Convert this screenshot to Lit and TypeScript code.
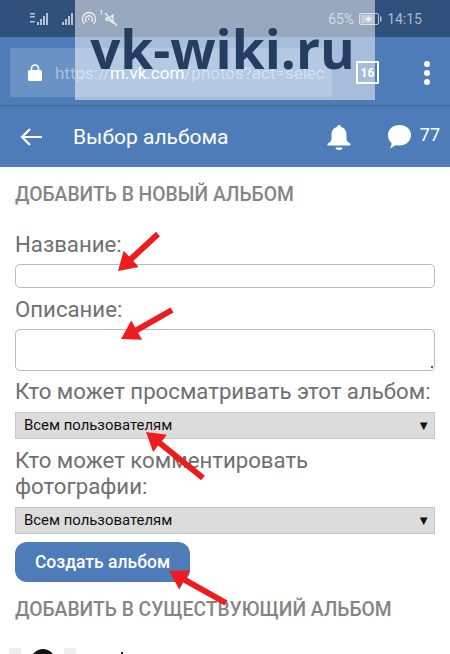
import { LitElement, html, css, svg } from "lit";
import { customElement } from "lit/decorators.js";

type Arrow = [number, number, number, number];
const ARROWS: Arrow[] = [
  [158, 234, 118, 271],
  [172, 310, 121, 339],
  [203, 478, 146, 432],
  [226, 603, 169, 571],
];

function arrowPoints([x1, y1, x2, y2]: Arrow): string {
  const dx = x2 - x1, dy = y2 - y1;
  const len = Math.hypot(dx, dy);
  const ux = dx / len, uy = dy / len;
  const nx = -uy, ny = ux;
  const head = 18, hw = 11, sw = 3;
  const bx = x2 - ux * head, by = y2 - uy * head;
  const pts = [
    [x1 + nx * sw, y1 + ny * sw],
    [bx + nx * sw, by + ny * sw],
    [bx + nx * hw, by + ny * hw],
    [x2, y2],
    [bx - nx * hw, by - ny * hw],
    [bx - nx * sw, by - ny * sw],
    [x1 - nx * sw, y1 - ny * sw],
  ];
  return pts.map((p) => p.map((v) => v.toFixed(1)).join(",")).join(" ");
}

@customElement("app-root")
export class AppRoot extends LitElement {
  static styles = css`
    :host {
      display: block;
      position: relative;
      width: 450px;
      height: 654px;
      overflow: hidden;
      background: #fff;
      font-family: Roboto, "Liberation Sans", sans-serif;
    }
    * { box-sizing: border-box; }
    .status {
      height: 37px;
      background: #30507c;
      display: flex;
      align-items: center;
      padding: 0 28px 0 30px;
      color: #a9b8cc;
      font-size: 14px;
    }
    .status svg { display: block; }
    .status .left { display: flex; align-items: center; gap: 12px; }
    .status .wifi { display: flex; align-items: center; gap: 5px; }
    .status .sup { font-size: 8px; color: #e4e8ee; margin: -12px -6px 0 -3px; }
    .status .right { margin-left: auto; display: flex; align-items: center; gap: 5px; }
    .browser {
      height: 70px;
      background: #4d7cb8;
      display: flex;
      align-items: center;
      padding: 3px 20px 0 10px;
      border-bottom: 2px solid #44709f;
    }
    .url {
      width: 322px;
      height: 49px;
      background: #6a92c4;
      border-radius: 2px;
      display: flex;
      align-items: center;
      padding-left: 18px;
      gap: 13px;
      color: #a6c0df;
      font-size: 17px;
      white-space: nowrap;
    }
    .url b { font-weight: 400; color: #fff; }
    .tabs {
      width: 23px;
      height: 23px;
      margin-left: 24px;
      border: 2px solid #fff;
      color: #fff;
      font-size: 12px;
      font-weight: 700;
      display: flex;
      align-items: center;
      justify-content: center;
    }
    .dots {
      margin-left: auto;
      display: flex;
      flex-direction: column;
      gap: 3px;
    }
    .dots i { width: 6px; height: 6px; border-radius: 50%; background: #fff; display: block; }
    .vk {
      height: 60px;
      background: #4d7cb8;
      display: flex;
      align-items: center;
      color: #fff;
      padding: 0 10px 0 20px;
    }
    .vk .title { margin-left: 31px; font-size: 21px; }
    .vk .bell { margin-left: auto; }
    .vk .msg { margin-left: 36px; }
    .vk .count { margin-left: 9px; font-size: 18px; margin-top: -6px; }
    .page { padding: 0 15px; }
    h2 {
      margin: 0;
      font-size: 19.3px;
      line-height: 22px;
      font-weight: 500;
      color: #858585;
    }
    h2.first { padding-top: 17px; }
    label {
      display: block;
      font-size: 22.2px;
      line-height: 26px;
      color: #707070;
    }
    .l1 { margin-top: 25px; }
    .box {
      display: block;
      width: 100%;
      border: 1px solid #b4bcc4;
      border-radius: 5px;
      background: #fff;
    }
    .input { height: 24px; margin-top: 7px; }
    .area { height: 42px; margin-top: 7px; position: relative; }
    .area::after {
      content: "";
      position: absolute;
      right: 1px;
      bottom: 2px;
      width: 2px;
      height: 2px;
      background: #555;
    }
    .l2 { margin-top: 8px; }
    .l3 { margin-top: 7px; }
    .select {
      height: 27px;
      background: #dcdcdc;
      border: 1px solid #c4c8cc;
      display: flex;
      align-items: center;
      justify-content: space-between;
      padding: 0 4px 1px 8px;
      font-size: 14.9px;
      color: #111;
      margin-top: 8px;
    }
    .select .caret { font-size: 13px; }
    .l4 { margin-top: 8px; }
    .button {
      display: flex;
      align-items: center;
      justify-content: center;
      width: 175px;
      height: 40px;
      margin-top: 8px;
      border: none;
      border-radius: 12px;
      background: #4d7cb8;
      color: #fff;
      font: 500 17.5px Roboto, sans-serif;
    }
    h2.second { margin-top: 17px; }
    .row { display: flex; align-items: flex-start; margin: 27px 0 0 -6px; height: 40px; }
    .sq { width: 12px; height: 40px; background: #efefef; }
    .avatar { width: 24px; height: 24px; border-radius: 50%; background: #111; margin: 1px 9px 0 10px; }
    .tick { width: 2px; height: 3px; background: #222; margin: 4px 0 0 45px; }
    .watermark {
      position: absolute;
      left: 75px;
      top: 0;
      width: 300px;
      height: 100px;
      background: rgba(255, 255, 255, 0.5);
      color: #233e60;
      font: 700 53px "Open Sans", Roboto, sans-serif;
      white-space: nowrap;
      display: flex;
      justify-content: center;
      padding: 14px 5px 0 0;
      line-height: 70px;
    }
    .arrows { position: absolute; left: 0; top: 0; pointer-events: none; }
  `;

  render() {
    return html`
      <div class="status">
        <div class="left">
          <svg width="20" height="14" viewBox="0 0 20 14" fill="#b5c2d4">
            <rect x="0" y="1" width="5" height="1.5"/><rect x="0" y="4" width="5" height="1.5"/>
            <rect x="0" y="9" width="5" height="1.5"/>
            <rect x="7" y="10" width="2" height="3"/><rect x="10" y="7" width="2" height="6"/>
            <rect x="13" y="4" width="2" height="9"/><rect x="16" y="1" width="2" height="12"/>
          </svg>
          <div class="wifi">
            <svg width="14" height="14" viewBox="0 0 14 14" fill="#b5c2d4">
              <rect x="0" y="10" width="2" height="3"/><rect x="3" y="7" width="2" height="6"/>
              <rect x="6" y="4" width="2" height="9"/><rect x="9" y="1" width="2" height="12"/>
            </svg>
            <svg width="16" height="16" viewBox="0 0 16 16" fill="none" stroke="#d4dbe4" stroke-width="1.4">
              <path d="M3.5 13A6.6 6.6 0 1 1 12.500 13"/><path d="M5.500 11A3.600 3.600 0 1 1 10.500 11"/>
              <circle cx="8" cy="8" r="1" fill="#d4dbe4" stroke="none"/>
            </svg>
            <span class="sup">1</span>
            <svg width="16" height="16" viewBox="0 0 16 16" fill="none" stroke="#d4dbe4" stroke-width="1.3">
              <path d="M3 7h3l4-3v8l-4-3H3z"/><path d="M2 2l12 13"/>
            </svg>
          </div>
        </div>
        <div class="right">
          <span>65%</span>
          <svg width="23" height="12" viewBox="0 0 23 12" fill="none">
            <rect x="0.5" y="0.5" width="19" height="11" rx="1.5" stroke="#b5c2d4"/>
            <rect x="1.5" y="1.500" width="14" height="9" fill="#b5c2d4" opacity="0.6"/>
            <path d="M6 6h6M12 6l-3-2v4z" stroke="#fff" stroke-width="1"/>
            <rect x="21" y="3.500" width="1.500" height="5" fill="#b5c2d4"/>
          </svg>
          <span>14:15</span>
        </div>
      </div>

      <div class="browser">
        <div class="url">
          <svg width="14" height="17" viewBox="0 0 14 17">
            <path d="M3.500 7V4.500a3.500 3.500 0 0 1 7 0V7" fill="none" stroke="#fff" stroke-width="1.600"/>
            <rect x="0" y="6" width="14" height="11" rx="1.500" fill="#fff"/>
          </svg>
          <span>https://<b>m.vk.com</b>/photos?act=selec</span>
        </div>
        <div class="tabs">16</div>
        <div class="dots"><i></i><i></i><i></i></div>
      </div>

      <div class="vk">
        <svg width="22" height="18" viewBox="0 0 22 18" fill="none" stroke="#fff" stroke-width="2.200">
          <path d="M22 9H2M10 1L2 9l8 8"/>
        </svg>
        <span class="title">Выбор альбома</span>
        <svg class="bell" width="24" height="26" viewBox="0 0 24 26" fill="#fff">
          <path d="M12 1a2 2 0 0 1 2 2c4 1 5.500 4 5.500 8v4c0 2 2 3.500 4 5v1.500H.5V20c2-1.500 4-3 4-5v-4c0-4 1.500-7 5.500-8a2 2 0 0 1 2-2z"/>
          <path d="M8.500 23.500h7a3.500 2.500 0 0 1-7 0z"/>
        </svg>
        <svg class="msg" width="24" height="24" viewBox="0 0 24 24" fill="#fff">
          <path d="M12.500 0C19 0 24 4 24 10s-5 10.500-11.500 10.500c-1.500 0-2.500 0-3.500-.5L3 23.500c1-2 1.500-3.500 1.500-5.500C2 16 1 13 1 10 1 4 6 0 12.500 0z"/>
        </svg>
        <span class="count">77</span>
      </div>

      <div class="page">
        <h2 class="first">ДОБАВИТЬ В НОВЫЙ АЛЬБОМ</h2>
        <label class="l1">Название:</label>
        <div class="box input"></div>
        <label class="l2">Описание:</label>
        <div class="box area"></div>
        <label class="l3">Кто может просматривать этот альбом:</label>
        <div class="select"><span>Всем пользователям</span><span class="caret">▼</span></div>
        <label class="l4">Кто может комментировать<br />фотографии:</label>
        <div class="select"><span>Всем пользователям</span><span class="caret">▼</span></div>
        <button class="button">Создать альбом</button>
        <h2 class="second">ДОБАВИТЬ В СУЩЕСТВУЮЩИЙ АЛЬБОМ</h2>
        <div class="row">
          <div class="sq"></div><div class="avatar"></div><div class="sq"></div><div class="tick"></div>
        </div>
      </div>

      <div class="watermark">vk-wiki.ru</div>
      <svg class="arrows" width="450" height="654" viewBox="0 0 450 654">
        ${ARROWS.map((a) => svg`<polygon points=${arrowPoints(a)} fill="#ee1c1c"/>`)}
      </svg>
    `;
  }
}
